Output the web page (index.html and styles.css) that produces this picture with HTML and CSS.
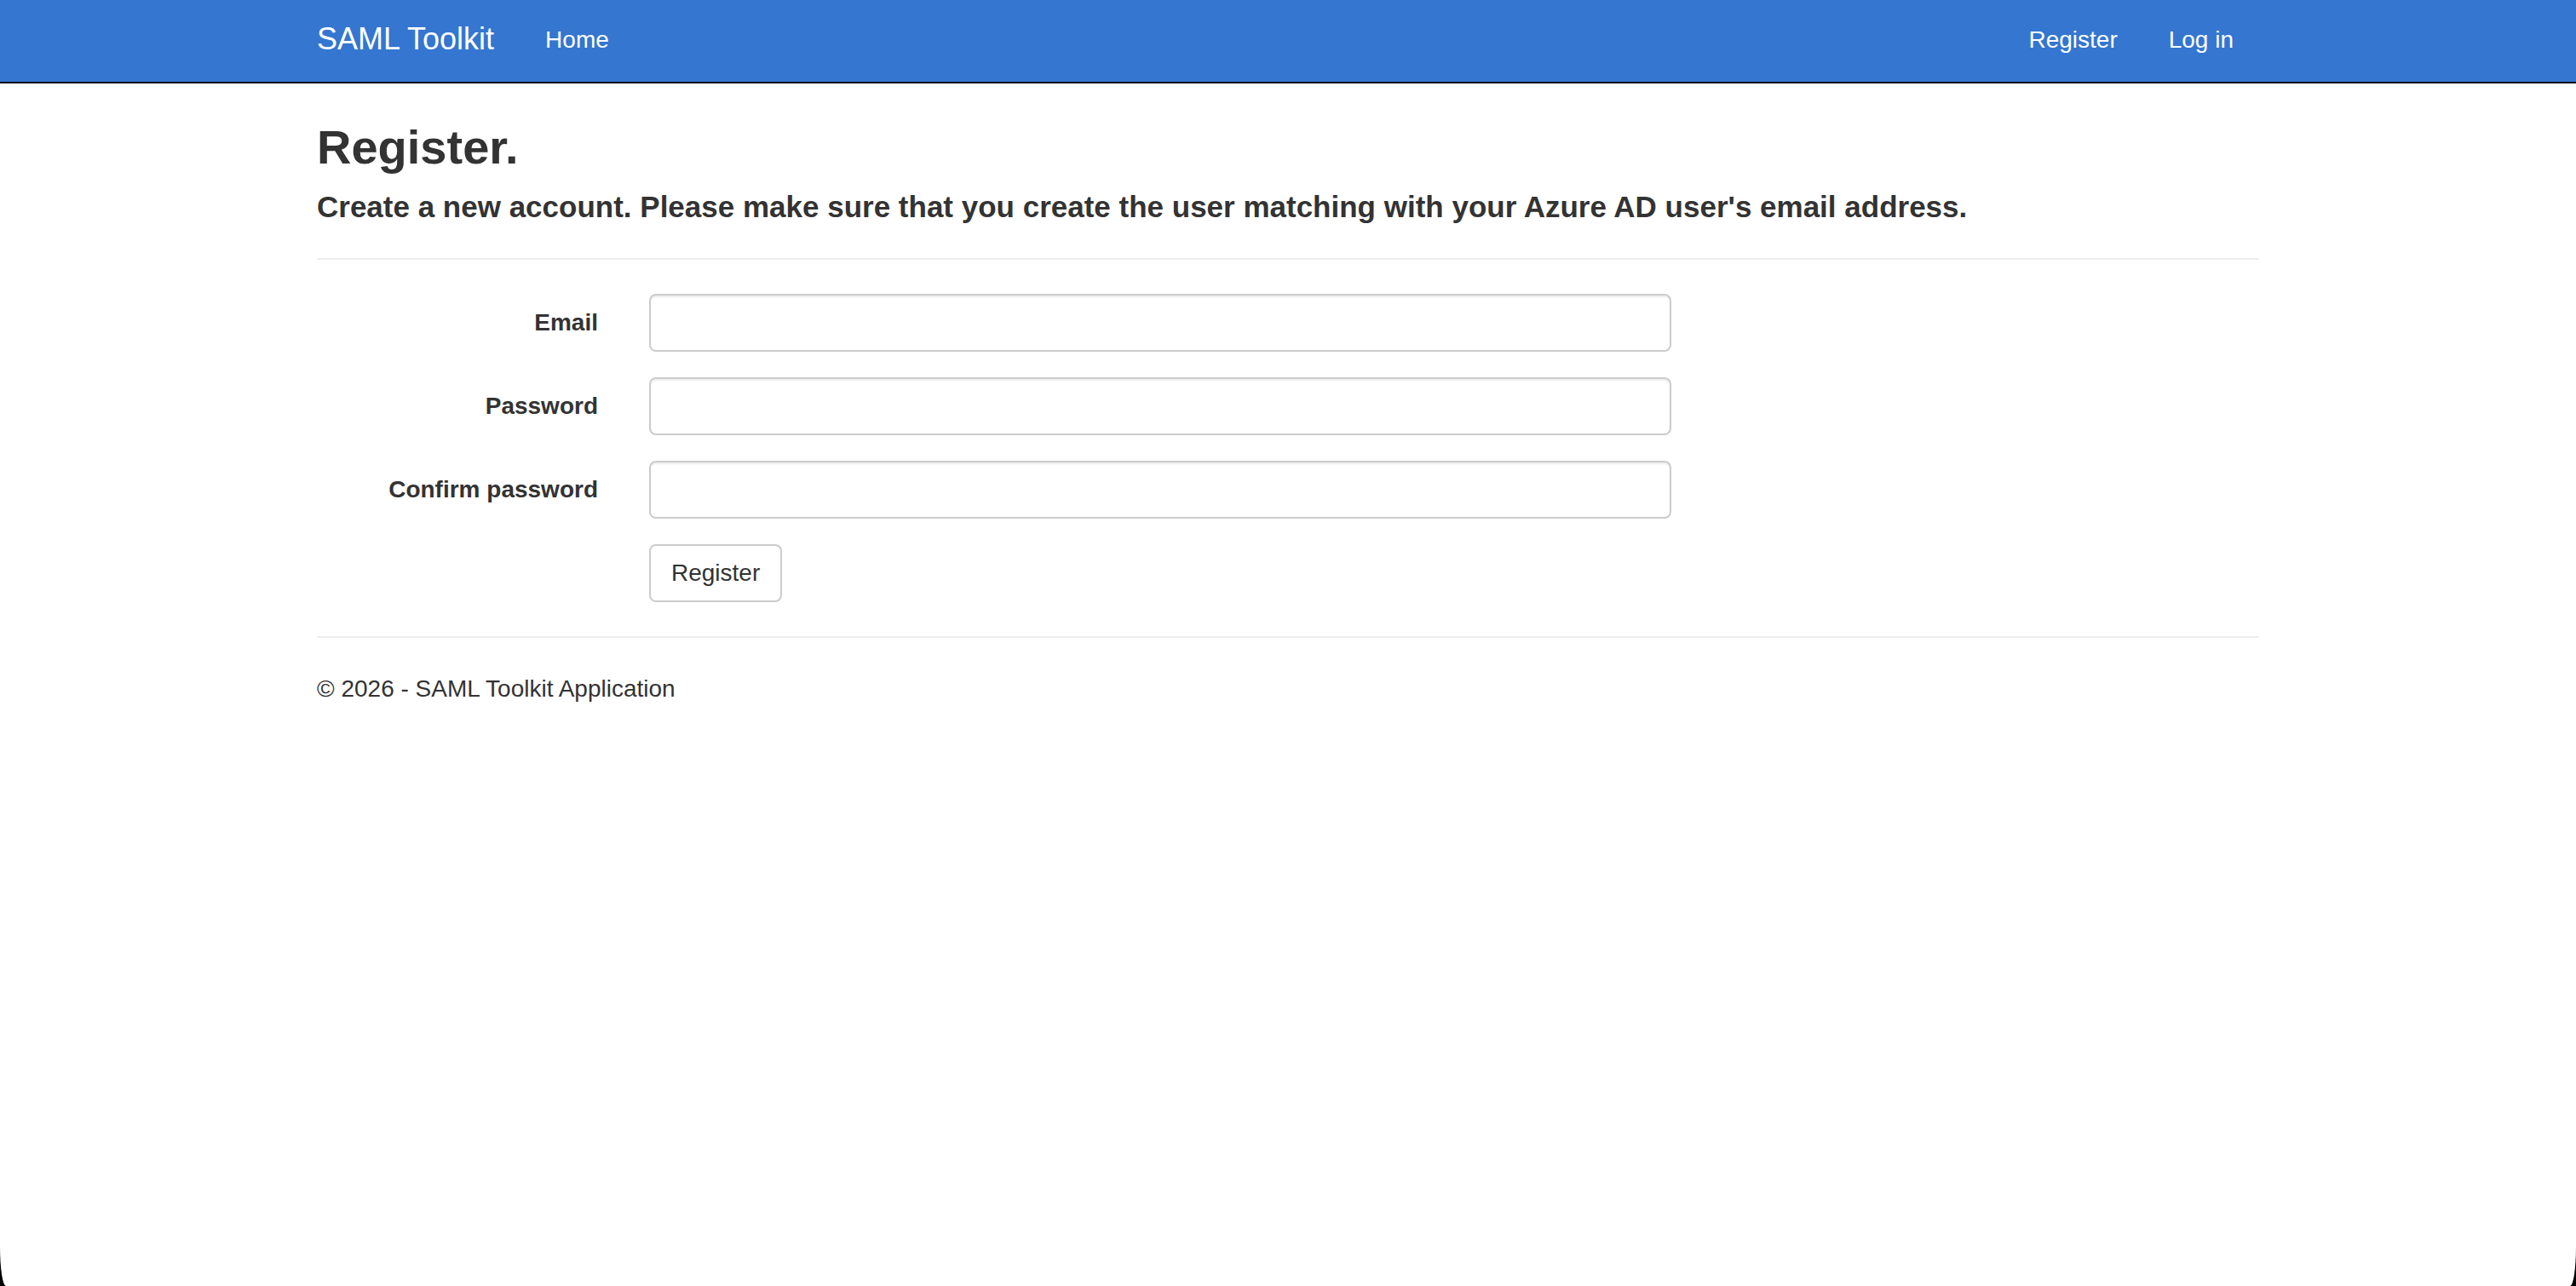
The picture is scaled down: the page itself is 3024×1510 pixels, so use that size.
FILE: index.html
```html
<!DOCTYPE html>
<html lang="en">
<head>
<meta charset="utf-8">
<title>Register - SAML Toolkit</title>
<link rel="stylesheet" href="styles.css">
</head>
<body>
<div class="window">
  <nav class="navbar">
    <div class="container navbar-inner">
      <a class="brand" href="#">SAML Toolkit</a>
      <ul class="nav">
        <li><a href="#">Home</a></li>
      </ul>
      <ul class="nav nav-right">
        <li><a href="#">Register</a></li>
        <li><a href="#">Log in</a></li>
      </ul>
    </div>
  </nav>

  <main class="container body-content">
    <h2 class="page-title">Register.</h2>
    <h4 class="page-subtitle">Create a new account. Please make sure that you create the user matching with your Azure AD user's email address.</h4>
    <hr class="divider">

    <form class="form-horizontal">
      <div class="form-group">
        <label class="control-label" for="Email">Email</label>
        <input class="form-control" id="Email" type="email">
      </div>
      <div class="form-group">
        <label class="control-label" for="Password">Password</label>
        <input class="form-control" id="Password" type="password">
      </div>
      <div class="form-group">
        <label class="control-label" for="ConfirmPassword">Confirm password</label>
        <input class="form-control" id="ConfirmPassword" type="password">
      </div>
      <div class="form-group form-actions">
        <span class="control-label"></span>
        <button class="btn" type="button">Register</button>
      </div>
    </form>

    <hr class="divider footer-rule">
    <footer class="footer">
      <p>&copy; 2026 - SAML Toolkit Application</p>
    </footer>
  </main>
</div>
</body>
</html>
```

FILE: styles.css
```css
html {
  overflow: hidden;
  background: #000;
}

body {
  margin: 0;
  background: #000;
  font-family: "Liberation Sans", Arial, Helvetica, sans-serif;
  font-size: 28px;
  line-height: 40px;
  color: #333;
}

/* white app window with the rounded bottom corners of the frame */
.window {
  background: #fff;
  height: 100vh;
  border-radius: 0 0 7px 7px / 0 0 46px 46px;
  overflow: hidden;
}

.container {
  width: 2280px;
  margin: 0 auto;
}

/* top navigation bar */
.navbar {
  height: 96px;
  background: #3476d0;
  border-bottom: 2px solid #000;
}

.navbar-inner {
  display: flex;
  align-items: flex-start;
  height: 96px;
}

.brand {
  display: block;
  padding: 26px 30px 0 0;
  font-size: 36px;
  line-height: 40px;
  color: #fff;
  text-decoration: none;
}

.nav {
  display: flex;
  list-style: none;
  margin: 0;
  padding: 0;
}

.nav a {
  display: block;
  padding: 27px 30px 0;
  line-height: 40px;
  color: #fff;
  text-decoration: none;
}

.nav-right {
  margin-left: auto;
}

/* page body */
.body-content {
  padding-top: 44px;
}

.page-title {
  margin: 0;
  font-size: 56px;
  line-height: 62px;
  font-weight: 700;
}

.page-subtitle {
  margin: 19px 0 0;
  font-size: 35px;
  line-height: 40px;
  font-weight: 700;
}

.divider {
  margin: 40px 0;
  border: 0;
  border-top: 2px solid #eee;
  height: 0;
}

.form-group {
  display: flex;
  align-items: flex-start;
  gap: 60px;
  margin-bottom: 30px;
}

.form-actions {
  margin-bottom: 0;
}

.control-label {
  width: 330px;
  flex: none;
  padding-top: 14px;
  text-align: right;
  font-weight: 700;
}

.form-control {
  box-sizing: border-box;
  width: 1200px;
  height: 68px;
  padding: 12px 24px;
  border: 2px solid #ccc;
  border-radius: 8px;
  box-shadow: inset 0 2px 2px rgba(0, 0, 0, 0.075);
  font: inherit;
  color: #555;
  background: #fff;
}

.btn {
  box-sizing: border-box;
  height: 68px;
  padding: 12px 24px;
  border: 2px solid #ccc;
  border-radius: 8px;
  background: #fff;
  color: #333;
  font: inherit;
}

.footer-rule {
  margin-top: 40px;
  margin-bottom: 40px;
}

.footer p {
  margin: 0;
}
```
